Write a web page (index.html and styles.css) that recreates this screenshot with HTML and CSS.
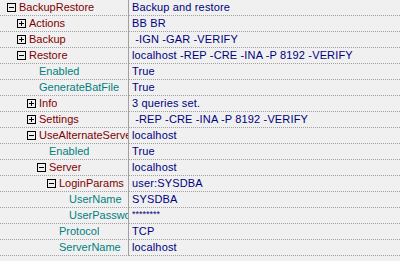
FILE: index.html
```html
<!DOCTYPE html>
<html>
<head>
    <title>BackupRestore</title>
    <link rel="stylesheet" href="styles.css">
</head>
<body>
    <div class="grid">
        <div class="row">
            <div class="name node l0"><svg class="box" width="9" height="9"><rect x="0.5" y="0.5" width="8" height="8"/><path d="M2 4.5h5"/></svg><span>BackupRestore</span></div>
            <div class="value">Backup and restore</div>
        </div>
        <div class="row">
            <div class="name node l1"><svg class="box" width="9" height="9"><rect x="0.5" y="0.5" width="8" height="8"/><path d="M2 4.5h5M4.5 2v5"/></svg><span>Actions</span></div>
            <div class="value">BB BR</div>
        </div>
        <div class="row">
            <div class="name node l1"><svg class="box" width="9" height="9"><rect x="0.5" y="0.5" width="8" height="8"/><path d="M2 4.5h5M4.5 2v5"/></svg><span>Backup</span></div>
            <div class="value"> -IGN -GAR -VERIFY</div>
        </div>
        <div class="row">
            <div class="name node l1"><svg class="box" width="9" height="9"><rect x="0.5" y="0.5" width="8" height="8"/><path d="M2 4.5h5"/></svg><span>Restore</span></div>
            <div class="value">localhost -REP -CRE -INA -P 8192 -VERIFY</div>
        </div>
        <div class="row">
            <div class="name leaf l2"><span>Enabled</span></div>
            <div class="value">True</div>
        </div>
        <div class="row">
            <div class="name leaf l2"><span>GenerateBatFile</span></div>
            <div class="value">True</div>
        </div>
        <div class="row">
            <div class="name node l2"><svg class="box" width="9" height="9"><rect x="0.5" y="0.5" width="8" height="8"/><path d="M2 4.5h5M4.5 2v5"/></svg><span>Info</span></div>
            <div class="value">3 queries set.</div>
        </div>
        <div class="row">
            <div class="name node l2"><svg class="box" width="9" height="9"><rect x="0.5" y="0.5" width="8" height="8"/><path d="M2 4.5h5M4.5 2v5"/></svg><span>Settings</span></div>
            <div class="value"> -REP -CRE -INA -P 8192 -VERIFY</div>
        </div>
        <div class="row">
            <div class="name node l2"><svg class="box" width="9" height="9"><rect x="0.5" y="0.5" width="8" height="8"/><path d="M2 4.5h5"/></svg><span>UseAlternateServer</span></div>
            <div class="value">localhost</div>
        </div>
        <div class="row">
            <div class="name leaf l3"><span>Enabled</span></div>
            <div class="value">True</div>
        </div>
        <div class="row">
            <div class="name node l3"><svg class="box" width="9" height="9"><rect x="0.5" y="0.5" width="8" height="8"/><path d="M2 4.5h5"/></svg><span>Server</span></div>
            <div class="value">localhost</div>
        </div>
        <div class="row">
            <div class="name node l4"><svg class="box" width="9" height="9"><rect x="0.5" y="0.5" width="8" height="8"/><path d="M2 4.5h5"/></svg><span>LoginParams</span></div>
            <div class="value">user:SYSDBA</div>
        </div>
        <div class="row">
            <div class="name leaf l5"><span>UserName</span></div>
            <div class="value">SYSDBA</div>
        </div>
        <div class="row">
            <div class="name leaf l5"><span>UserPassword</span></div>
            <div class="value secret">********</div>
        </div>
        <div class="row">
            <div class="name leaf l4"><span>Protocol</span></div>
            <div class="value">TCP</div>
        </div>
        <div class="row">
            <div class="name leaf l4"><span>ServerName</span></div>
            <div class="value">localhost</div>
        </div>
    </div>
</body>
</html>
```

FILE: styles.css
```css
body {
    margin: 0;
    font-family: "Liberation Sans", Arial, sans-serif;
    font-size: 11px;
    background-color: #f0f0f0;
}
.grid {
    width: 400px;
}
.row {
    display: flex;
    height: 16px;
}
.name,
.value {
    height: 16px;
    box-sizing: border-box;
    line-height: 15px;
    border-bottom: 1px dotted #a0a0a0;
    white-space: pre;
    overflow: hidden;
}
.name {
    display: flex;
    align-items: flex-start;
    flex: 0 0 129px;
    border-right: 1px solid #a0a0a0;
}
.name span {
    min-width: 0;
    overflow: hidden;
}
.value {
    flex: 1;
    padding-left: 3px;
    color: #000080;
    letter-spacing: 0.15px;
}
.node {
    color: #800000;
}
.leaf {
    color: #008080;
}
.box {
    flex: 0 0 9px;
    margin: 3px 3px 0 0;
}
.box rect {
    fill: none;
    stroke: #000;
}
.box path {
    stroke: #000;
    fill: none;
}
.node.l0 { padding-left: 7px; }
.node.l1 { padding-left: 17px; }
.node.l2 { padding-left: 27px; }
.node.l3 { padding-left: 37px; }
.node.l4 { padding-left: 47px; }
.leaf.l2 { padding-left: 39px; }
.leaf.l3 { padding-left: 49px; }
.leaf.l4 { padding-left: 59px; }
.leaf.l5 { padding-left: 69px; }
.secret {
    font-size: 9px;
    line-height: 13px;
    letter-spacing: 0;
}
```
